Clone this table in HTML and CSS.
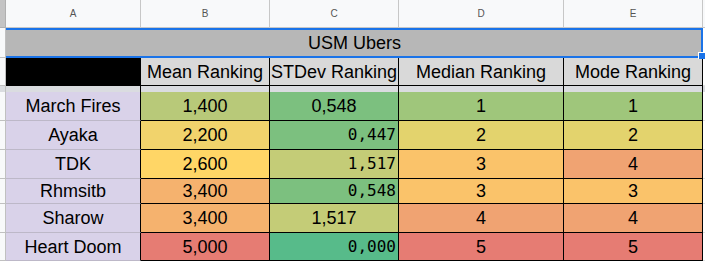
FILE: index.html
```html
<!DOCTYPE html>
<html>
<head>
<meta charset="utf-8">
<link rel="stylesheet" href="styles.css">
</head>
<body>
<div class="sheet">
  <!-- column letters -->
  <div class="c corner"></div>
  <div class="c colhead">A</div>
  <div class="c colhead">B</div>
  <div class="c colhead">C</div>
  <div class="c colhead">D</div>
  <div class="c colhead">E</div>
  <div class="c colhead f"></div>

  <!-- title row -->
  <div class="c stub"></div>
  <div class="c title">USM Ubers<span class="handle"></span></div>
  <div class="c blank"></div>

  <!-- header row -->
  <div class="c stub"></div>
  <div class="c hdr black"></div>
  <div class="c hdr">Mean Ranking</div>
  <div class="c hdr">STDev Ranking</div>
  <div class="c hdr">Median Ranking</div>
  <div class="c hdr">Mode Ranking</div>
  <div class="c blank"></div>

  <!-- frozen divider -->
  <div class="c freeze stubfreeze"></div>
  <div class="c freeze"></div>
  <div class="c freeze"></div>
  <div class="c freeze"></div>
  <div class="c freeze"></div>
  <div class="c freeze"></div>
  <div class="c freeze last"></div>

  <!-- data -->
  <div class="c stub"></div>
  <div class="c name">March Fires</div>
  <div class="c val mean1">1,400</div>
  <div class="c val sd-low">0,548</div>
  <div class="c val k1">1</div>
  <div class="c val k1">1</div>
  <div class="c blank"></div>

  <div class="c stub"></div>
  <div class="c name">Ayaka</div>
  <div class="c val mean2">2,200</div>
  <div class="c val mono sd-low">0,447</div>
  <div class="c val k2">2</div>
  <div class="c val k2">2</div>
  <div class="c blank"></div>

  <div class="c stub"></div>
  <div class="c name">TDK</div>
  <div class="c val mean3">2,600</div>
  <div class="c val mono sd-mid">1,517</div>
  <div class="c val k3">3</div>
  <div class="c val k4">4</div>
  <div class="c blank"></div>

  <div class="c stub"></div>
  <div class="c name">Rhmsitb</div>
  <div class="c val mean4">3,400</div>
  <div class="c val mono sd-low">0,548</div>
  <div class="c val k3">3</div>
  <div class="c val k3">3</div>
  <div class="c blank"></div>

  <div class="c stub"></div>
  <div class="c name">Sharow</div>
  <div class="c val mean4">3,400</div>
  <div class="c val sd-mid">1,517</div>
  <div class="c val k4">4</div>
  <div class="c val k4">4</div>
  <div class="c blank"></div>

  <div class="c stub"></div>
  <div class="c name">Heart Doom</div>
  <div class="c val k5">5,000</div>
  <div class="c val mono sd-zero">0,000</div>
  <div class="c val k5">5</div>
  <div class="c val k5">5</div>
  <div class="c blank"></div>
</div>
</body>
</html>
```

FILE: styles.css
```css
html, body {
  margin: 0;
  padding: 0;
  background: #ffffff;
  overflow: hidden;
}

.sheet {
  display: grid;
  width: 705px;
  grid-template-columns: 6px 135px 129px 129px 165px 139px 1fr;
  grid-template-rows: 28px 30px 28px 6px 29px 29px 29px 25px 29px 28px;
  font-family: "Liberation Sans", Arial, sans-serif;
  font-size: 18px;
  color: #000;
}

.c {
  box-sizing: border-box;
  border-right: 1px solid #000;
  border-bottom: 1px solid #000;
  display: flex;
  align-items: center;
  justify-content: center;
  line-height: 20px;
  white-space: nowrap;
  min-width: 0;
}

.corner {
  background: #c4c4c4;
  border-right: 1px solid #b0b0b0;
  border-bottom: 1px solid #b0b0b0;
}

.colhead {
  background: #f8f9fa;
  border-right: 1px solid #c7c7c7;
  border-bottom: 1px solid #c7c7c7;
  font-size: 10px;
  color: #555;
  padding-top: 1px;
}

.colhead.f {
  border-right: none;
}

.stub {
  background: #f8f9fa;
  border-right: 1px solid #c0c0c0;
  border-bottom: 1px solid #c0c0c0;
}

.blank {
  background: #fff;
  border-right: none;
  border-bottom: 1px solid #e2e3e3;
}

.title {
  grid-column: 2 / 7;
  position: relative;
  background: #b7b7b7;
  border-top: 2px solid #1a73e8;
  border-bottom: 2px solid #1a73e8;
  border-right: 2px solid #1a73e8;
  padding-left: 2px;
}

.handle {
  position: absolute;
  right: -4px;
  bottom: -3px;
  width: 7px;
  height: 7px;
  box-sizing: border-box;
  background: #1a73e8;
  border-left: 1px solid #fff;
  border-top: 1px solid #fff;
}

.hdr {
  background: #d9d9d9;
}

.hdr.black {
  background: #000;
}

.freeze {
  background: #dadce0;
  border-bottom: none;
}

.freeze.stubfreeze {
  border-right: 1px solid #c0c0c0;
}

.freeze.last {
  border-right: none;
}

.name {
  background: #d9d2e9;
  border-bottom: 1px solid #bdb8c8;
}

.val.mono {
  font-family: "DejaVu Sans Mono", "Liberation Mono", monospace;
  font-size: 16px;
  justify-content: flex-end;
  padding-right: 2px;
}

.mean1 { background: #b8c979; }
.mean2 { background: #f1d36c; }
.mean3 { background: #ffd666; }
.mean4 { background: #f5b26e; }

.sd-low { background: #7cc07f; }
.sd-mid { background: #c4cc77; }
.sd-zero { background: #57bb8a; }

.k1 { background: #9fc67b; }
.k2 { background: #e3d36d; }
.k3 { background: #fac36a; }
.k4 { background: #f0a372; }
.k5 { background: #e67c73; }
```
